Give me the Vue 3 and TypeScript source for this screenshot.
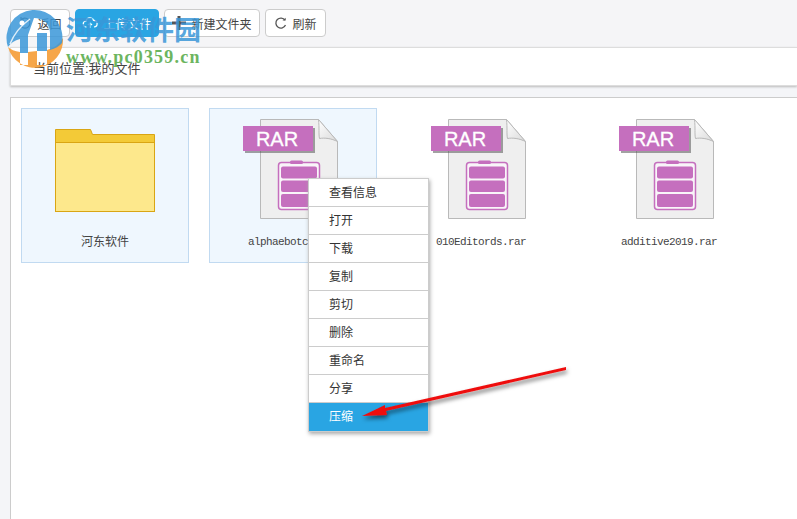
<script setup lang="ts">
interface iFile {
  name: string
  folder?: boolean
}

const tools = ['返回', '上传文件', '新建文件夹', '刷新']

const files: iFile[] = [
  { name: '河东软件', folder: true },
  { name: 'alphaebotcd.rar' },
  { name: '010Editords.rar' },
  { name: 'additive2019.rar' }
]

const menu = ['查看信息', '打开', '下载', '复制', '剪切', '删除', '重命名', '分享', '压缩']
</script>

<template>
  <div class="page">
    <div class="toolbar">
      <button class="tool" type="button">
        <svg width="14" height="14" viewBox="0 0 14 14" fill="none" stroke="#555" stroke-width="1.2"><path d="M3 4a5 5 0 1 1-.5 5.5M3 1v3h3" /></svg>
        {{ tools[0] }}
      </button>
      <button class="tool primary" type="button">
        <svg width="16" height="14" viewBox="0 0 16 14" fill="none" stroke="#fff" stroke-width="1.2"><path d="M4.5 11A3 3 0 0 1 4 5a4 4 0 0 1 7.6-.6A3.3 3.3 0 0 1 12 11M8 12V7M6 9l2-2 2 2" /></svg>
        {{ tools[1] }}
      </button>
      <button class="tool" type="button">
        <svg width="14" height="14" viewBox="0 0 14 14" fill="none" stroke="#555" stroke-width="3"><path d="M7 0v14M0 7h14" /></svg>
        {{ tools[2] }}
      </button>
      <button class="tool" type="button">
        <svg width="13" height="13" viewBox="0 0 13 13" fill="none" stroke="#555" stroke-width="1.3"><path d="M11 3.2A5 5 0 1 0 11.5 8" /><path d="M8.5 3.6h3.2V.8" fill="#555" stroke="none" /></svg>
        {{ tools[3] }}
      </button>
    </div>

    <div class="location">当前位置:我的文件</div>

    <div class="panel">
      <div class="grid">
        <div v-for="(file, i) in files" :key="file.name" class="card" :class="{ selected: i < 2 }">
          <svg v-if="file.folder" class="folderIcon" width="100" height="83" viewBox="0 0 100 83">
            <path d="M.5 13.5V.5h35l2 5h62v8z" fill="#f3ca37" stroke="#d9a514" />
            <rect x=".5" y="13.5" width="99" height="69" fill="#fde88c" stroke="#d9a514" />
          </svg>
          <svg v-else class="rarIcon" width="96" height="100" viewBox="0 0 96 100">
            <defs>
              <linearGradient :id="'fold' + i" x1="0" y1="0" x2="1" y2="1">
                <stop offset="0" stop-color="#ffffff" />
                <stop offset="1" stop-color="#d9d9d9" />
              </linearGradient>
            </defs>
            <path d="M17.5.5h58l19 22v77h-77z" fill="#efefef" stroke="#b9b9b9" />
            <path d="M75.5.5c1 8 0 15 1 19 5-1 12 0 18 3z" :fill="'url(#fold' + i + ')'" stroke="#b9b9b9" />
            <rect x="2" y="9" width="70" height="25" fill="#555" opacity=".55" />
            <rect x="0" y="7" width="70" height="25" fill="#c56fbe" />
            <text x="34" y="27" text-anchor="middle" class="rarText">RAR</text>
            <rect x="35.5" y="43.5" width="41" height="47" rx="3" fill="#f9f5f9" stroke="#c56fbe" stroke-width="1.5" />
            <rect x="47" y="41.5" width="13" height="3.5" rx="1.5" fill="#c56fbe" />
            <rect x="38" y="47.5" width="36" height="12" rx="2" fill="#c56fbe" />
            <rect x="38" y="61.5" width="36" height="11.5" rx="2" fill="#c56fbe" />
            <rect x="38" y="75" width="36" height="13" rx="2" fill="#c56fbe" />
          </svg>
          <div class="name" :class="{ mono: !file.folder }">{{ file.name }}</div>
        </div>
      </div>
    </div>

    <ul class="menu">
      <li v-for="(item, i) in menu" :key="item" class="menuItem" :class="{ active: i === menu.length - 1 }">{{ item }}</li>
    </ul>

    <svg class="arrow" width="230" height="70" viewBox="0 0 230 70">
      <defs>
        <filter id="arrowShadow" x="-10%" y="-30%" width="120%" height="170%">
          <feDropShadow dx="1" dy="3" stdDeviation="2" flood-color="#000" flood-opacity=".55" />
        </filter>
      </defs>
      <path d="M205 3 L205 6 L25 47 L26 51 L1 52 L24 41 L24 44 Z" fill="#ee1111" filter="url(#arrowShadow)" />
    </svg>

    <div class="watermark">
      <svg width="66" height="64" viewBox="0 0 66 64">
        <path d="M8 42A28 28 0 0 0 63 33Q58 42 47 45V60H37V46L28 47V60H20V47Q12 46 8 42Z" fill="#f6a13f" opacity=".95" />
        <path d="M8 42A28 28 0 1 1 62 38Q58 43 50 45V28C50 18 42 13 34 13L28 30H20V34Q12 36 8 42Z" fill="#3a97d8" opacity=".85" />
        <path d="M20 30h8v18h-8zM37 28h10v18H37z" fill="#3a97d8" opacity=".85" />
        <path d="M10 39Q16 24 30 14" fill="none" stroke="#fff" stroke-width="1.5" opacity=".8" />
        <circle cx="22" cy="18" r="2.5" fill="#fff" />
      </svg>
      <div class="brand">
        <div class="brandName">河东软件园</div>
        <div class="brandUrl">www.pc0359.cn</div>
      </div>
    </div>
  </div>
</template>

<style>
html, body {
  margin: 0;
  height: 100%;
  overflow: hidden;
  background: #f4f5f8;
}
</style>

<style scoped>
.page {
  position: relative;
  height: 519px;
  padding-left: 10px;
  font-family: "Liberation Sans", "Noto Sans CJK SC", sans-serif;
  font-size: 12px;
  color: #444;
}
.toolbar {
  display: flex;
  height: 47px;
  box-sizing: border-box;
  padding-top: 9px;
  gap: 5px;
  background: #f5f5f7;
}
.tool {
  display: flex;
  align-items: center;
  justify-content: center;
  gap: 5px;
  height: 28px;
  padding: 0;
  box-sizing: border-box;
  background: #fff;
  border: 1px solid #ccc;
  border-radius: 4px;
  font: inherit;
  color: #444;
  white-space: nowrap;
}
.tool:nth-child(1) { width: 60px; }
.tool:nth-child(2) { width: 84px; }
.tool:nth-child(3) { width: 96px; }
.tool:nth-child(4) { width: 61px; }
.primary {
  background: #29a5e3;
  border-color: #29a5e3;
  color: #fff;
}
.location {
  height: 39px;
  box-sizing: border-box;
  padding: 12px 0 0 22px;
  background: #fff;
  border: 1px solid #ddd;
  border-right: none;
  box-shadow: 0 1px 2px #bbb;
  font-size: 13px;
  line-height: 18px;
}
.panel {
  height: 423px;
  margin-top: 11px;
  box-sizing: border-box;
  padding: 10px 0 0 10px;
  background: #fff;
  border-top: 1px solid #ccc;
  border-left: 1px solid #ccc;
}
.grid {
  display: flex;
  gap: 20px;
}
.card {
  width: 168px;
  height: 155px;
  box-sizing: border-box;
  border: 1px solid transparent;
  padding-top: 10px;
}
.selected {
  background: #eff7fe;
  border-color: #c1daf1;
}
.folderIcon {
  display: block;
  margin: 10px 0 0 33px;
}
.rarIcon {
  display: block;
  margin-left: 33px;
}
.rarText {
  font: 400 20px "Liberation Sans", sans-serif;
  fill: #fff;
  stroke: #fff;
  stroke-width: .3px;
}
.name {
  margin-top: 15px;
  text-align: center;
  line-height: 16px;
}
.card:first-child .name {
  margin-top: 22px;
}
.mono {
  font-family: "Liberation Mono", monospace;
  font-size: 11px;
  letter-spacing: -.6px;
}
.menu {
  position: absolute;
  left: 308px;
  top: 178px;
  width: 121px;
  margin: 0;
  padding: 0;
  box-sizing: border-box;
  list-style: none;
  background: #fff;
  border: 1px solid #ccc;
  box-shadow: 1px 2px 4px #aaa;
}
.menuItem {
  height: 28px;
  box-sizing: border-box;
  padding: 1px 0 0 20px;
  border-bottom: 1px solid #ccc;
  line-height: 27px;
  color: #333;
}
.active {
  background: #29a5e3;
  border-bottom: none;
  color: #fff;
}
.arrow {
  position: absolute;
  left: 361px;
  top: 364px;
}
.watermark {
  position: absolute;
  left: 0;
  top: 5px;
  display: flex;
  pointer-events: none;
}
.brandName {
  font: 700 27px/32px "Noto Sans CJK SC", sans-serif;
  color: rgba(58, 151, 216, .85);
  margin-top: 8px;
}
.brandUrl {
  font: 700 18px/20px "Liberation Serif", serif;
  letter-spacing: 1.2px;
  color: #6cb55f;
  margin-top: 2px;
}
</style>
